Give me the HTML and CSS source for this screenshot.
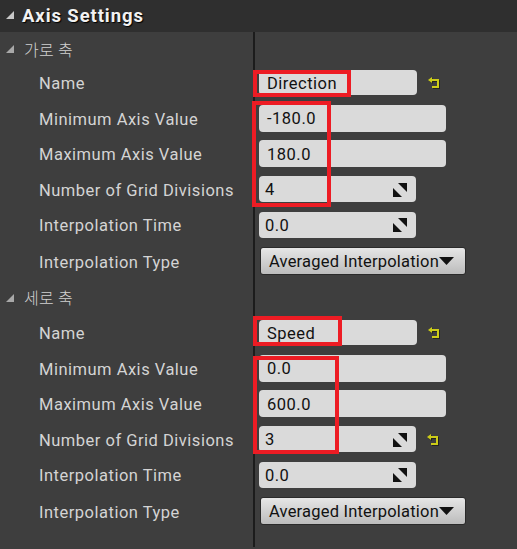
FILE: index.html
```html
<!DOCTYPE html>
<html>
<head>
<meta charset="utf-8">
<link rel="stylesheet" href="styles.css">
</head>
<body>
<div class="panel">
  <div class="header">
    <svg class="tri-h" width="10" height="10" viewBox="0 0 10 10"><polygon points="9,1 9,9 1,9" fill="#c8c8c8"/></svg>
    <span class="title">Axis Settings</span>
  </div>

  <div class="row section first">
    <div class="label sec"><svg class="tri" width="10" height="9" viewBox="0 0 10 9"><polygon points="9,0 9,8 1,8" fill="#a8a8a8"/></svg>가로 축</div>
    <div class="div"></div><div class="val"></div>
  </div>
  <div class="row">
    <div class="label">Name</div><div class="div"></div>
    <div class="val"><div class="field w158 h25">Direction</div>
      <svg class="reset" width="13" height="13" viewBox="0 0 13 13"><path d="M5 1 L1 4 L5 7 Z" fill="#cccc18"/><path d="M4 4 H11 V11 H5" fill="none" stroke="#cccc18" stroke-width="2"/></svg></div>
  </div>
  <div class="row">
    <div class="label">Minimum Axis Value</div><div class="div"></div>
    <div class="val"><div class="field w187 h27">-180.0</div></div>
  </div>
  <div class="row">
    <div class="label">Maximum Axis Value</div><div class="div"></div>
    <div class="val"><div class="field w187 h27">180.0</div></div>
  </div>
  <div class="row">
    <div class="label">Number of Grid Divisions</div><div class="div"></div>
    <div class="val"><div class="field w157 h26 spin"><span>4</span><svg width="14" height="14" viewBox="0 0 14 14"><polygon points="5,0 14,0 14,9" fill="#111"/><polygon points="0,5 0,14 9,14" fill="#111"/></svg></div></div>
  </div>
  <div class="row">
    <div class="label">Interpolation Time</div><div class="div"></div>
    <div class="val"><div class="field w157 h26 spin"><span>0.0</span><svg width="14" height="14" viewBox="0 0 14 14"><polygon points="5,0 14,0 14,9" fill="#111"/><polygon points="0,5 0,14 9,14" fill="#111"/></svg></div></div>
  </div>
  <div class="row tall">
    <div class="label">Interpolation Type</div><div class="div"></div>
    <div class="val"><div class="combo">Averaged Interpolation<svg width="15" height="8" viewBox="0 0 15 8"><polygon points="0,0 15,0 7.5,8" fill="#111"/></svg></div></div>
  </div>

  <div class="row section">
    <div class="label sec"><svg class="tri" width="10" height="9" viewBox="0 0 10 9"><polygon points="9,0 9,8 1,8" fill="#a8a8a8"/></svg>세로 축</div>
    <div class="div"></div><div class="val"></div>
  </div>
  <div class="row">
    <div class="label">Name</div><div class="div"></div>
    <div class="val"><div class="field w158 h25">Speed</div>
      <svg class="reset" width="13" height="13" viewBox="0 0 13 13"><path d="M5 1 L1 4 L5 7 Z" fill="#cccc18"/><path d="M4 4 H11 V11 H5" fill="none" stroke="#cccc18" stroke-width="2"/></svg></div>
  </div>
  <div class="row">
    <div class="label">Minimum Axis Value</div><div class="div"></div>
    <div class="val"><div class="field w187 h27">0.0</div></div>
  </div>
  <div class="row">
    <div class="label">Maximum Axis Value</div><div class="div"></div>
    <div class="val"><div class="field w187 h27">600.0</div></div>
  </div>
  <div class="row">
    <div class="label">Number of Grid Divisions</div><div class="div"></div>
    <div class="val"><div class="field w157 h26 spin"><span>3</span><svg width="14" height="14" viewBox="0 0 14 14"><polygon points="5,0 14,0 14,9" fill="#111"/><polygon points="0,5 0,14 9,14" fill="#111"/></svg></div>
      <svg class="reset" width="13" height="13" viewBox="0 0 13 13"><path d="M5 1 L1 4 L5 7 Z" fill="#cccc18"/><path d="M4 4 H11 V11 H5" fill="none" stroke="#cccc18" stroke-width="2"/></svg></div>
  </div>
  <div class="row">
    <div class="label">Interpolation Time</div><div class="div"></div>
    <div class="val"><div class="field w157 h26 spin"><span>0.0</span><svg width="14" height="14" viewBox="0 0 14 14"><polygon points="5,0 14,0 14,9" fill="#111"/><polygon points="0,5 0,14 9,14" fill="#111"/></svg></div></div>
  </div>
  <div class="row tall">
    <div class="label">Interpolation Type</div><div class="div"></div>
    <div class="val"><div class="combo">Averaged Interpolation<svg width="15" height="8" viewBox="0 0 15 8"><polygon points="0,0 15,0 7.5,8" fill="#111"/></svg></div></div>
  </div>
  <div class="row tail">
    <div class="label"></div><div class="div"></div><div class="val"></div>
  </div>

  <div class="mark m1"></div>
  <div class="mark m2"></div>
  <div class="mark m3"></div>
  <div class="mark m4"></div>
</div>
</body>
</html>
```

FILE: styles.css
```css
html, body {
  margin: 0;
  padding: 0;
  background: #3e3e3e;
}
body {
  font-family: Roboto, "Noto Sans CJK KR", sans-serif;
  width: 517px;
  height: 549px;
  overflow: hidden;
}
.panel {
  position: relative;
  width: 517px;
  height: 549px;
  background: #3e3e3e;
}
.header {
  height: 32px;
  background: #2f2f2f;
  display: flex;
  align-items: center;
}
.tri-h {
  margin-left: 5px;
  margin-right: 7px;
  margin-top: -2px;
}
.title {
  font-weight: bold;
  font-size: 18.5px;
  color: #f2f2f2;
  text-shadow: 1px 1px 1px #000;
  letter-spacing: 0.9px;
}
.row {
  display: grid;
  grid-template-columns: 253px 2px 1fr;
  height: 35.5px;
}
.row.first { height: 33px; }
.row.tall { height: 37px; }
.row.tail { height: 17px; }
.div { background: #1c1c1c; }
.label {
  display: flex;
  align-items: center;
  padding-left: 39px;
  padding-top: 2px;
  box-sizing: border-box;
  font-size: 16.5px;
  letter-spacing: 0.5px;
  color: #d4d4d4;
  white-space: nowrap;
}
.label.sec {
  padding-left: 5px;
  padding-top: 0;
  font-family: "Noto Sans CJK KR", Roboto, sans-serif;
  font-size: 16px;
  font-weight: 300;
  letter-spacing: 0.3px;
  color: #d0d0d0;
}
.tri {
  margin-right: 9px;
  margin-top: 2px;
}
.val {
  display: flex;
  align-items: center;
  padding-left: 4px;
}
.field {
  box-sizing: border-box;
  background: #dadada;
  border-radius: 4px;
  color: #111;
  font-size: 16.5px;
  letter-spacing: 0.5px;
  padding-left: 8px;
  padding-top: 1px;
  display: flex;
  align-items: center;
}
.w158 { width: 158px; }
.w187 { width: 187px; }
.w157 { width: 157px; }
.h25 { height: 25px; }
.h26 { height: 26px; }
.h27 { height: 27px; }
.spin {
  justify-content: space-between;
  padding-left: 6px;
  padding-right: 9px;
}
.reset {
  margin-left: 10px;
  filter: drop-shadow(1px 1px 0 #222);
}
.combo {
  box-sizing: border-box;
  margin-left: 1px;
  width: 206px;
  height: 28px;
  border: 1px solid #2a2a2a;
  border-radius: 3px;
  background: linear-gradient(#e6e6e6, #bcbcbc);
  color: #111;
  font-size: 16.5px;
  letter-spacing: 0.2px;
  display: flex;
  align-items: center;
  padding-left: 8px;
  gap: 0;
}
.mark {
  position: absolute;
  border: 4px solid #ed1c24;
  box-sizing: border-box;
}
.m1 { left: 253px; top: 70px; width: 98px; height: 27px; }
.m2 { left: 252px; top: 101px; width: 79px; height: 106px; }
.m3 { left: 253px; top: 316px; width: 89px; height: 30px; }
.m4 { left: 253px; top: 356px; width: 86px; height: 98px; }
```
